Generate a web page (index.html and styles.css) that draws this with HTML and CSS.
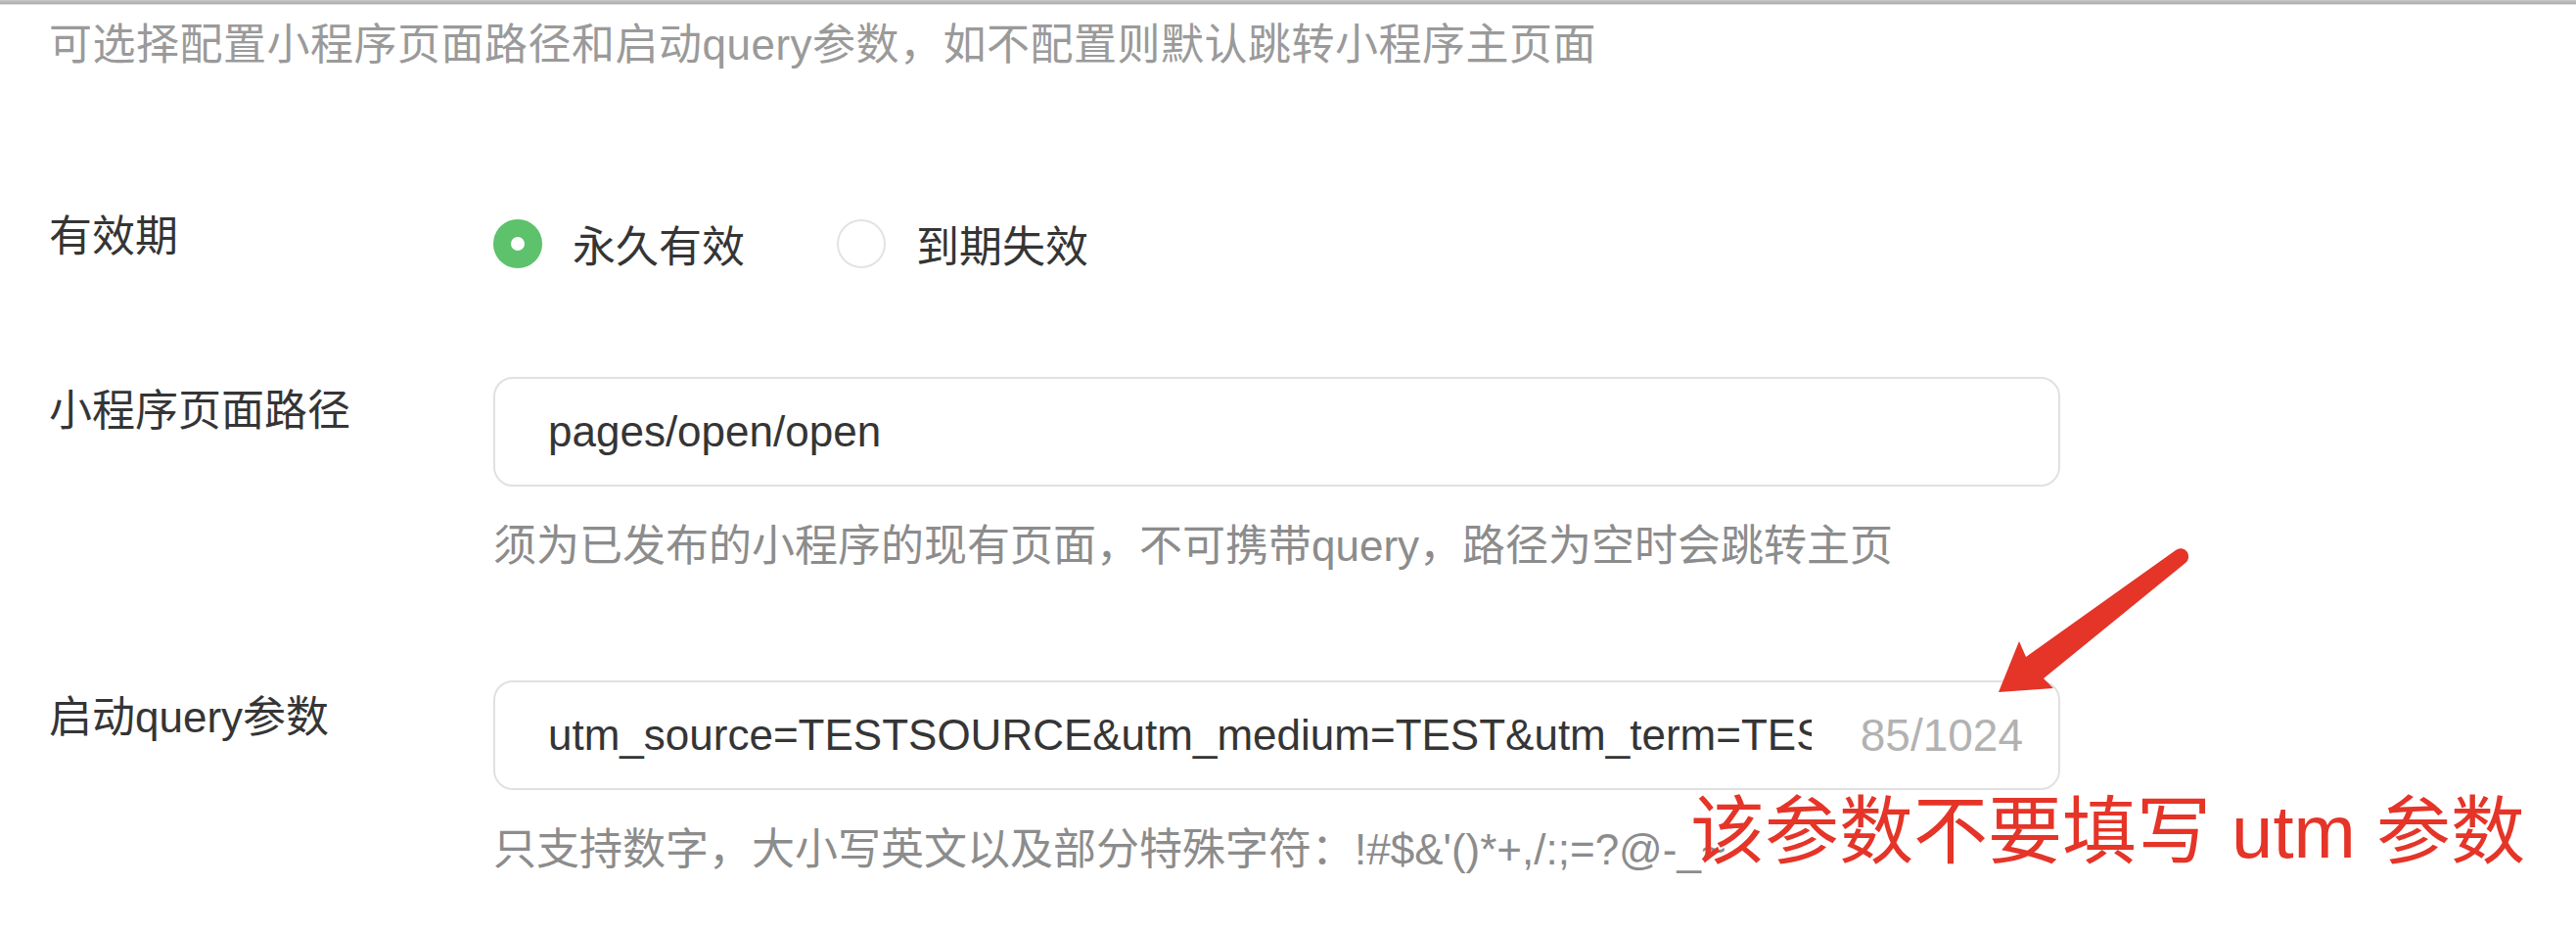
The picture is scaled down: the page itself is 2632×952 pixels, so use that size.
FILE: index.html
```html
<!DOCTYPE html>
<html>
<head>
  <title>小程序跳转配置</title>
  <link rel="stylesheet" href="styles.css">
</head>
<body>
  <div class="page">
    <div class="top-rule"></div>
    <div class="form">
      <p class="intro">可选择配置小程序页面路径和启动query参数，如不配置则默认跳转小程序主页面</p>

      <div class="row row-validity">
        <div class="label">有效期</div>
        <div class="radios">
          <label class="radio checked"><span class="radio-dot"></span>永久有效</label>
          <label class="radio"><span class="radio-dot"></span>到期失效</label>
        </div>
      </div>

      <div class="row row-path">
        <div class="label">小程序页面路径</div>
        <div>
          <div class="field">
            <input type="text" value="pages/open/open" readonly>
          </div>
          <p class="hint">须为已发布的小程序的现有页面，不可携带query，路径为空时会跳转主页</p>
        </div>
      </div>

      <div class="row row-query">
        <div class="label">启动query参数</div>
        <div>
          <div class="field">
            <input type="text" value="utm_source=TESTSOURCE&amp;utm_medium=TEST&amp;utm_term=TEST&amp;utm_content=TEST&amp;utm_campaign=TEST" readonly>
            <span class="counter">85/1024</span>
          </div>
          <p class="hint">只支持数字，大小写英文以及部分特殊字符：!#$&amp;'()*+,/:;=?@-_~</p>
        </div>
      </div>
    </div>

    <!-- annotation drawn on top of the screenshot -->
    <svg class="arrow" width="210" height="170" viewBox="2030 550 210 170">
      <path d="M2042 707 L2063 655 L2070 671 L2223 562 A7.5 7.5 0 0 1 2233 575 L2088 693 L2098 703 Z" fill="#e53428"/>
    </svg>
    <div class="note">该参数不要填写 utm 参数</div>
  </div>
</body>
</html>
```

FILE: styles.css
```css
body {
  margin: 0;
  font-family: "Liberation Sans", "Noto Sans CJK SC", sans-serif;
  color: #353535;
  background: #fff;
}
.page {
  position: relative;
  width: 2632px;
  height: 952px;
  overflow: hidden;
}
.top-rule {
  height: 4px;
  background: linear-gradient(#c9c9c9, #a9a9a9);
  border-bottom: 1px solid #dcdcdc;
}
.form {
  padding-left: 50px;
}
.intro {
  margin: 11px 0 0;
  font-size: 44px;
  line-height: 60px;
  letter-spacing: 0.5px;
  color: #9a9a9a;
}
.row {
  display: grid;
  grid-template-columns: 454px 1601px;
}
.row-validity {
  margin-top: 136px;
}
.row-path {
  margin-top: 106px;
}
.row-query {
  margin-top: 107px;
}
.label {
  font-size: 44px;
  line-height: 60px;
  color: #353535;
}
.row-path .label {
  padding-top: 5px;
}
.row-query .label {
  padding-top: 8px;
}
.radios {
  display: flex;
  align-items: center;
  gap: 94px;
  height: 60px;
  padding-top: 7px;
}
.radio {
  display: flex;
  align-items: center;
  gap: 31px;
  font-size: 44px;
}
.radio-dot {
  width: 50px;
  height: 50px;
  box-sizing: border-box;
  border: 2px solid #e3e3e3;
  border-radius: 50%;
}
.radio.checked .radio-dot {
  border: 18px solid #5ec16c;
  background: #fff;
}
.field {
  display: flex;
  align-items: center;
  height: 112px;
  box-sizing: border-box;
  padding: 0 36px 0 54px;
  border: 2px solid #e1e1e1;
  border-radius: 20px;
}
.field input {
  flex: 1;
  min-width: 0;
  padding: 0;
  border: 0;
  outline: 0;
  background: transparent;
  font: inherit;
  font-size: 44px;
  color: #353535;
}
.counter {
  margin-left: 50px;
  font-size: 46px;
  color: #b2b2b2;
}
.hint {
  margin: 31px 0 0;
  font-size: 44px;
  line-height: 60px;
  color: #8c8c8c;
}
.arrow {
  position: absolute;
  left: 2030px;
  top: 550px;
}
.note {
  position: absolute;
  left: 1727px;
  top: 812px;
  font-size: 76px;
  line-height: 1;
  color: #e53428;
  white-space: nowrap;
}
```
